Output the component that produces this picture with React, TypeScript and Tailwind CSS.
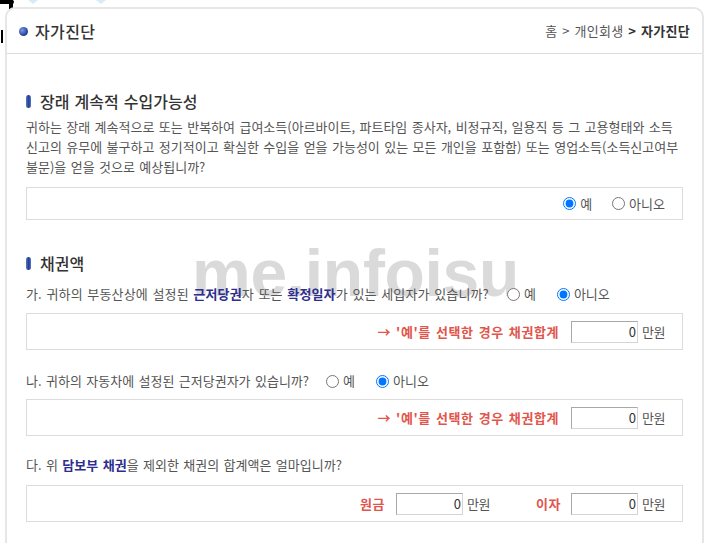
import type { ReactNode } from "react";

const KR = "font-['Noto_Sans_CJK_KR','Noto_Sans',sans-serif]";

function Pill() {
  return (
    <span className="inline-block h-[13px] w-[5px] rounded-full bg-[linear-gradient(90deg,#5b78c9,#1f3c8e_55%,#5b78c9)]" />
  );
}

function SectionTitle({ children }: { children: ReactNode }) {
  return (
    <div className="flex h-[20px] items-center gap-[9px]">
      <Pill />
      <span className="text-[16px] font-medium text-[#333]">{children}</span>
    </div>
  );
}

function Radio({ name, label, checked, className = "" }: { name: string; label: string; checked?: boolean; className?: string }) {
  return (
    <label className={["flex items-center gap-[4px]", className].join(" ")}>
      <input type="radio" name={name} defaultChecked={checked} className="m-0 h-[13px] w-[13px]" />
      <span>{label}</span>
    </label>
  );
}

function Amount() {
  return (
    <div className="flex items-center gap-[4px]">
      <input
        readOnly
        value="0"
        className="h-[22px] w-[67px] border border-[#a8a8a8] border-b-[#d4d4d4] border-r-[#d4d4d4] px-[1px] text-right text-[13px] text-[#333] outline-none"
      />
      <span className="tracking-[-0.5px]">만원</span>
    </div>
  );
}

function Box({ children, h = "h-[37px]" }: { children: ReactNode; h?: string }) {
  return (
    <div className={["flex items-center justify-end border border-[#dcdcdc] pr-[17px]", h].join(" ")}>
      {children}
    </div>
  );
}

const red = "font-bold tracking-[0.6px] text-[#e2554c]";
const navy = "font-bold text-[#2e2e8e]";

export default function App() {
  return (
    <div className={["relative min-h-[543px] overflow-hidden bg-white text-[13px] text-[#555] [word-spacing:1.5px]", KR].join(" ")}>
      {/* bits of the page behind */}
      <div className="absolute left-0 top-0 h-[4px] w-[14px] rounded-r-sm bg-black" />
      <div className="absolute left-[9px] top-0 h-[9px] w-[4px] bg-black" />
      <div className="absolute left-[1px] top-[30px] h-[13px] w-[2px] bg-black" />
      <div className="absolute left-[28px] top-0 h-0 w-0 border-l-[5px] border-r-[5px] border-t-[4px] border-l-transparent border-r-transparent border-t-[#d7ecf8]" />
      <div className="absolute left-[96px] top-0 h-0 w-0 border-l-[5px] border-r-[5px] border-t-[4px] border-l-transparent border-r-transparent border-t-[#d7ecf8]" />

      {/* watermark */}
      <div className="pointer-events-none absolute left-[192px] top-[240px] select-none font-['Liberation_Sans',Arial,sans-serif] text-[66px] font-bold leading-none tracking-[-0.3px] text-[#dadada] [word-spacing:0]">
        me.infoisu
      </div>

      <div className="relative mx-[5px] pt-[7px]">
        <div className="rounded-t-[10px] border-2 border-b-0 border-[#e6e6e6] pb-[30px]">
          <div className="flex h-[45px] items-center justify-between border-b border-[#dddddd] pl-[12px] pr-[12px]">
            <div className="flex items-center gap-[7px]">
              <span className="inline-block h-[9px] w-[9px] rounded-full bg-[radial-gradient(circle_at_35%_35%,#7e9ae6,#1d3b91_70%)]" />
              <span className="text-[16px] font-medium tracking-[0.4px] text-[#333]">자가진단</span>
            </div>
            <div className="text-[13px] tracking-[0.3px] text-[#555]">
              홈 &gt; 개인회생 <span className="font-bold text-[#333]">&gt; 자가진단</span>
            </div>
          </div>

          <div className="px-[19px]">
            <div className="mt-[37px]">
              <SectionTitle>장래 계속적 수입가능성</SectionTitle>
            </div>
            <p className="mt-[6px] leading-[20px]">
              귀하는 장래 계속적으로 또는 반복하여 급여소득(아르바이트, 파트타임 종사자, 비정규직, 일용직 등 그 고용형태와 소득
              <br />
              신고의 유무에 불구하고 정기적이고 확실한 수입을 얻을 가능성이 있는 모든 개인을 포함함) 또는 영업소득(소득신고여부
              <br />
              불문)을 얻을 것으로 예상됩니까?
            </p>
            <div className="mt-[10px]">
              <Box h="h-[33px]">
                <Radio name="q1" label="예" checked />
                <Radio name="q1" label="아니오" className="ml-[20px]" />
              </Box>
            </div>

            <div className="mt-[33px]">
              <SectionTitle>채권액</SectionTitle>
            </div>

            <div className="mt-[11px] flex h-[20px] items-center">
              <span className="tracking-[0.15px]">
                가. 귀하의 부동산상에 설정된 <span className={navy}>근저당권</span>자 또는 <span className={navy}>확정일자</span>가 있는 세입자가 있습니까?
              </span>
              <Radio name="q2" label="예" className="ml-[18px]" />
              <Radio name="q2" label="아니오" checked className="ml-[21px]" />
            </div>
            <div className="mt-[9px]">
              <Box>
                <span className={red}>→ '예'를 선택한 경우 채권합계</span>
                <div className="ml-[12px]">
                  <Amount />
                </div>
              </Box>
            </div>

            <div className="mt-[21px] flex h-[20px] items-center">
              <span>나. 귀하의 자동차에 설정된 근저당권자가 있습니까?</span>
              <Radio name="q3" label="예" className="ml-[17px]" />
              <Radio name="q3" label="아니오" checked className="ml-[21px]" />
            </div>
            <div className="mt-[8px]">
              <Box>
                <span className={red}>→ '예'를 선택한 경우 채권합계</span>
                <div className="ml-[12px]">
                  <Amount />
                </div>
              </Box>
            </div>

            <div className="mt-[19px] flex h-[20px] items-center">
              <span>
                다. 위 <span className={navy}>담보부 채권</span>을 제외한 채권의 합계액은 얼마입니까?
              </span>
            </div>
            <div className="mt-[10px]">
              <Box>
                <span className={red}>원금</span>
                <div className="ml-[11px]">
                  <Amount />
                </div>
                <span className={["ml-[46px]", red].join(" ")}>이자</span>
                <div className="ml-[10px]">
                  <Amount />
                </div>
              </Box>
            </div>
          </div>
        </div>
      </div>
    </div>
  );
}
